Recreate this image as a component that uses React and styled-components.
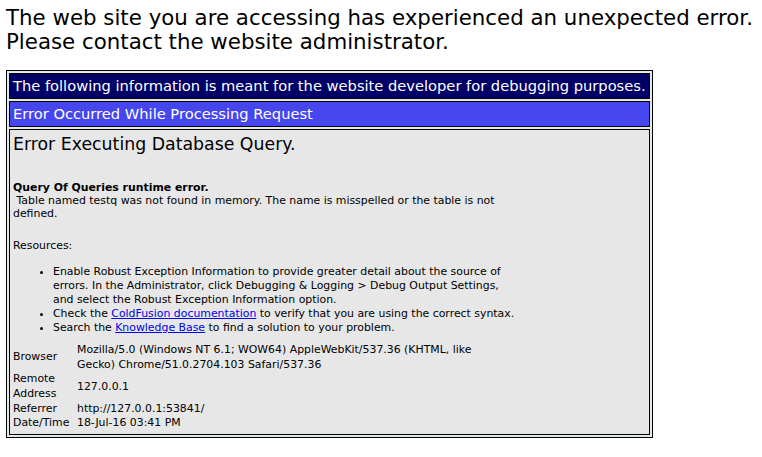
import styled, { createGlobalStyle } from "styled-components";

const GlobalStyle = createGlobalStyle`
  html, body {
    margin: 0;
    padding: 0;
    background: #ffffff;
  }
  body {
    font-family: "DejaVu Sans", Verdana, sans-serif;
    color: #000000;
  }
`;

const Page = styled.div`
  padding: 6px 0 0 6px;
`;

const Notice = styled.p`
  margin: 0;
  font-size: 21.33px;
  line-height: 24px;
  color: #000000;
`;

const Frame = styled.table`
  margin-top: 16px;
  width: 647px;
  border: 1px solid #000808;
  border-spacing: 2px;
  background: #e7e7e7;
`;

const tones = {
  debug: "#000066",
  error: "#4646ee",
  body: "#e7e7e7",
};

const Cell = styled.td`
  border: 1px solid #000808;
  padding: 3px;
  vertical-align: top;
  background: ${(p) => tones[p.$tone || "body"]};
  color: ${(p) => (p.$tone === "body" ? "#000000" : "#ffffff")};
  font-size: ${(p) => (p.$tone === "body" ? "10.9px" : "14.67px")};
  line-height: ${(p) => (p.$tone === "body" ? "13px" : "18px")};
  white-space: ${(p) => (p.$tone === "body" ? "normal" : "nowrap")};
`;

const Details = styled.div`
  width: 500px;
`;

const Title = styled.h1`
  margin: 1px 0 27px;
  font-size: 17.33px;
  line-height: 20px;
  font-weight: normal;
`;

const Message = styled.p`
  margin: 0;
  line-height: 13px;
`;

const Resources = styled.p`
  margin: 19px 0 0;
  line-height: 13px;
`;

const Tips = styled.ul`
  margin: 13px 0 0;
  padding-left: 40px;
  line-height: 14px;
  list-style: disc;
  white-space: nowrap;
`;

const Link = styled.a`
  color: #0000ee;
  text-decoration: underline;
`;

const Info = styled.table`
  margin-top: 8px;
  width: 500px;
  border-spacing: 0;
  line-height: 14.67px;
`;

const Label = styled.td`
  width: 64px;
  padding: 0;
  vertical-align: middle;
  text-align: left;
`;

const Value = styled.td`
  padding: 0;
  vertical-align: middle;
`;

const info = [
  [
    "Browser",
    <>
      Mozilla/5.0 (Windows NT 6.1; WOW64) AppleWebKit/537.36 (KHTML, like
      <br />
      Gecko) Chrome/51.0.2704.103 Safari/537.36
    </>,
  ],
  ["Remote Address", "127.0.0.1"],
  ["Referrer", "http://127.0.0.1:53841/"],
  ["Date/Time", "18-Jul-16 03:41 PM"],
];

const App = () => {
  return (
    <Page>
      <GlobalStyle />
      <Notice>
        The web site you are accessing has experienced an unexpected error.
        <br />
        Please contact the website administrator.
      </Notice>
      <Frame>
        <tbody>
          <tr>
            <Cell $tone="debug">
              The following information is meant for the website developer for debugging purposes.
            </Cell>
          </tr>
          <tr>
            <Cell $tone="error">Error Occurred While Processing Request</Cell>
          </tr>
          <tr>
            <Cell $tone="body">
              <Details>
                <Title>Error Executing Database Query.</Title>
                <Message>
                  <b>Query Of Queries runtime error.</b>
                  <br />
                  &nbsp;Table named testq was not found in memory. The name is misspelled or the table is not defined.
                </Message>
                <Resources>Resources:</Resources>
                <Tips>
                  <li>
                    Enable Robust Exception Information to provide greater detail about the source of
                    <br />
                    errors. In the Administrator, click Debugging &amp; Logging &gt; Debug Output Settings,
                    <br />
                    and select the Robust Exception Information option.
                  </li>
                  <li>
                    Check the <Link href="#">ColdFusion documentation</Link> to verify that you are using the correct
                    syntax.
                  </li>
                  <li>
                    Search the <Link href="#">Knowledge Base</Link> to find a solution to your problem.
                  </li>
                </Tips>
                <Info>
                  <tbody>
                    {info.map(([label, value]) => (
                      <tr key={label}>
                        <Label>{label}</Label>
                        <Value>{value}</Value>
                      </tr>
                    ))}
                  </tbody>
                </Info>
              </Details>
            </Cell>
          </tr>
        </tbody>
      </Frame>
    </Page>
  );
};

export default App;
